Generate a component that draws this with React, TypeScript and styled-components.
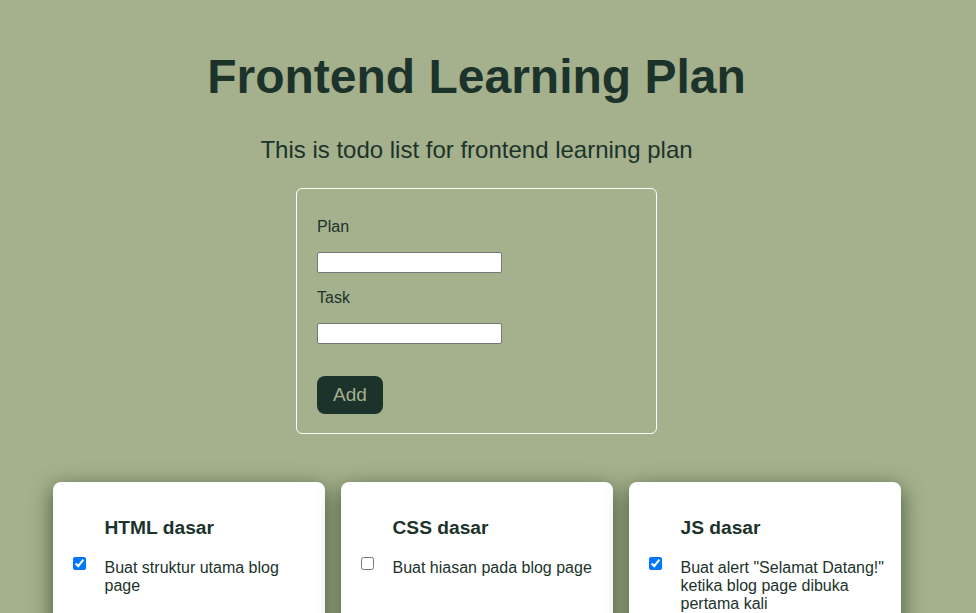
import React from "react";
import styled, { createGlobalStyle } from "styled-components";

const Global = createGlobalStyle`
  html, body { margin: 0; padding: 0; background: #a5b18c; }
  body { font-family: "Liberation Sans", Arial, sans-serif; color: #1c332b; }
`;

const Page = styled.main`
  width: 953px;
  display: flex;
  flex-direction: column;
  align-items: center;
  padding-top: 50px;
`;

const Title = styled.h1`
  margin: 0;
  font-size: 48px;
  font-weight: 700;
  line-height: 54px;
  color: #1c332b;
`;

const Subtitle = styled.p`
  margin: 32px 0 0;
  font-size: 24px;
  line-height: 27px;
  color: #1c332b;
`;

const Form = styled.form`
  margin-top: 25px;
  width: 361px;
  box-sizing: border-box;
  border: 1px solid #ffffff;
  border-radius: 6px;
  padding: 29px 20px 19px;
  display: flex;
  flex-direction: column;
  align-items: flex-start;
`;

const Label = styled.label<{ $gap: number }>`
  font-size: 16px;
  line-height: 18px;
  margin-bottom: ${(p) => p.$gap}px;
`;

const Input = styled.input`
  width: 185px;
  height: 21px;
  box-sizing: border-box;
  border: 1px solid #767676;
  border-radius: 2px;
  background: #fff;
  padding: 1px 2px;
  margin: 0 0 16px;
  &:last-of-type { margin-bottom: 32px; }
`;

const Button = styled.button`
  width: 66px;
  height: 38px;
  border: none;
  border-radius: 8px;
  background: #1c332b;
  color: #a5b18c;
  font-family: "Liberation Sans", Arial, sans-serif;
  font-size: 19px;
  padding: 0;
  cursor: pointer;
`;

const Cards = styled.section`
  margin-top: 48px;
  display: grid;
  grid-template-columns: repeat(3, 272px);
  gap: 16px;
`;

const Card = styled.article`
  background: #fff;
  border-radius: 8px;
  box-shadow: 0 6px 22px rgba(40, 62, 38, 0.8);
  padding: 35px 16px 40px 20px;
  min-height: 200px;
  display: grid;
  grid-template-columns: 32px 1fr;
  align-content: start;
`;

const CardTitle = styled.h3`
  grid-column: 2;
  margin: 0 0 20px;
  font-size: 19.2px;
  line-height: 22px;
  font-weight: 700;
  color: #1c332b;
`;

const Check = styled.input`
  grid-column: 1;
  width: 13px;
  height: 13px;
  margin: -2px 0 0;
`;

const TaskText = styled.span`
  grid-column: 2;
  font-size: 16px;
  line-height: 18px;
  color: #1c332b;
`;

const plans = [
  { title: "HTML dasar", task: "Buat struktur utama blog page", done: true },
  { title: "CSS dasar", task: "Buat hiasan pada blog page", done: false },
  { title: "JS dasar", task: 'Buat alert "Selamat Datang!" ketika blog page dibuka pertama kali', done: true },
];

export default function App() {
  return (
    <>
      <Global />
      <Page>
        <Title>Frontend Learning Plan</Title>
        <Subtitle>This is todo list for frontend learning plan</Subtitle>
        <Form onSubmit={(e) => e.preventDefault()}>
          <Label $gap={16}>Plan</Label>
          <Input type="text" />
          <Label $gap={16}>Task</Label>
          <Input type="text" />
          <Button type="submit">Add</Button>
        </Form>
        <Cards>
          {plans.map((p) => (
            <Card key={p.title}>
              <CardTitle>{p.title}</CardTitle>
              <Check type="checkbox" defaultChecked={p.done} />
              <TaskText>{p.task}</TaskText>
            </Card>
          ))}
        </Cards>
      </Page>
    </>
  );
}
